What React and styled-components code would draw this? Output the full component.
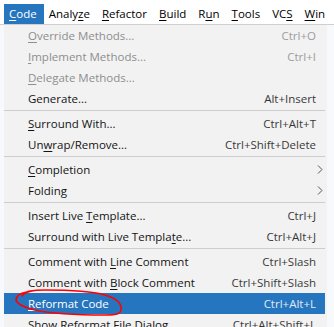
import React from 'react'
import styled, { createGlobalStyle } from 'styled-components'

const GlobalStyle = createGlobalStyle`
  html, body {
    margin: 0;
    padding: 0;
    background: #f7f9fc;
  }
  body {
    font-family: "Open Sans", "Noto Sans", sans-serif;
    font-size: 11.5px;
    color: #1b1b1b;
    overflow: hidden;
  }
`

const menus = [
  { label: 'Code', key: 0, open: true },
  { label: 'Analyze', key: 5 },
  { label: 'Refactor', key: 0 },
  { label: 'Build', key: 0 },
  { label: 'Run', key: 1 },
  { label: 'Tools', key: 0 },
  { label: 'VCS', key: 2 },
  { label: 'Win', key: 0 },
]

const groups = [
  [
    { label: 'Override Methods...', key: 0, shortcut: 'Ctrl+O', disabled: true },
    { label: 'Implement Methods...', key: 0, shortcut: 'Ctrl+I', disabled: true },
    { label: 'Delegate Methods...', key: 0, disabled: true },
    { label: 'Generate...', shortcut: 'Alt+Insert' },
  ],
  [
    { label: 'Surround With...', key: 0, shortcut: 'Ctrl+Alt+T' },
    { label: 'Unwrap/Remove...', key: 2, shortcut: 'Ctrl+Shift+Delete' },
  ],
  [
    { label: 'Completion', key: 0, sub: true },
    { label: 'Folding', sub: true },
  ],
  [
    { label: 'Insert Live Template...', key: 12, shortcut: 'Ctrl+J' },
    { label: 'Surround with Live Template...', key: 25, shortcut: 'Ctrl+Alt+J' },
  ],
  [
    { label: 'Comment with Line Comment', key: 13, shortcut: 'Ctrl+Slash' },
    { label: 'Comment with Block Comment', key: 13, shortcut: 'Ctrl+Shift+Slash' },
    { label: 'Reformat Code', key: 0, shortcut: 'Ctrl+Alt+L', active: true },
    { label: 'Show Reformat File Dialog', shortcut: 'Ctrl+Alt+Shift+L' },
  ],
]

function Mnemonic({ text, index }) {
  if (index === undefined) return text
  return (
    <>
      {text.slice(0, index)}
      <u>{text[index]}</u>
      {text.slice(index + 1)}
    </>
  )
}

function App() {
  return (
    <>
      <GlobalStyle />
      <MenuBar>
        {menus.map((m) => (
          <MenuTitle key={m.label} $open={m.open}>
            <Mnemonic text={m.label} index={m.key} />
          </MenuTitle>
        ))}
      </MenuBar>
      <Dropdown>
        {groups.map((items, gi) => (
          <React.Fragment key={gi}>
            {gi > 0 && <Separator />}
            {items.map((it) => (
              <Item key={it.label} $disabled={it.disabled} $active={it.active}>
                <span>
                  <Mnemonic text={it.label} index={it.key} />
                </span>
                <Shortcut>{it.shortcut}</Shortcut>
                <Arrow>
                  {it.sub && (
                    <svg width="6" height="9" viewBox="0 0 6 9">
                      <polyline points="1,0.5 5,4.5 1,8.5" fill="none" stroke="#555" strokeWidth="1" />
                    </svg>
                  )}
                </Arrow>
                {it.active && (
                  <Scribble width="112" height="32" viewBox="0 0 112 32">
                    <path
                      d="M9 9 C12 4 20 3 32 3 C52 3 78 4 92 8 C102 11 108 15 108 21 C109 27 104 28 92 28 C70 28 40 27 22 23 C10 20 4 17 3 13 C3 8 8 6 14 5"
                      fill="none"
                      stroke="#f00"
                      strokeWidth="1.6"
                      strokeLinecap="round"
                    />
                  </Scribble>
                )}
              </Item>
            ))}
          </React.Fragment>
        ))}
      </Dropdown>
    </>
  )
}

export default App

const MenuBar = styled.div`
  display: flex;
  align-items: flex-start;
  height: 25px;
  padding: 4px 0 0 4px;
  box-sizing: border-box;
  background: #ffffff;
  border-bottom: 1px solid #cfcfcf;
  white-space: nowrap;
  overflow: hidden;
  u { text-decoration-thickness: 1px; text-underline-offset: 2px; }
`

const MenuTitle = styled.div`
  height: 20px;
  line-height: 20px;
  padding: 0 7px 0 5px;
  background: ${(p) => (p.$open ? '#2675bf' : 'transparent')};
  color: ${(p) => (p.$open ? '#ffffff' : '#000000')};
  font-size: 11.5px;
`

const Dropdown = styled.div`
  margin-left: 4px;
  width: 323px;
  padding: 0 2px 0 0;
  box-sizing: border-box;
  background: #f2f2f2;
  u { text-decoration-thickness: 1px; text-underline-offset: 2px; }
`

const Separator = styled.div`
  height: 4px;
  display: flex;
  align-items: center;
  &::before {
    content: '';
    flex: 1;
    height: 1px;
    margin-top: -1px;
    background: #cdcdcd;
  }
`

const Item = styled.div`
  position: relative;
  display: grid;
  grid-template-columns: 1fr auto 7px;
  align-items: center;
  height: 21px;
  padding: 0 2px 0 24px;
  white-space: nowrap;
  background: ${(p) => (p.$active ? '#2675bf' : 'transparent')};
  color: ${(p) => (p.$active ? '#ffffff' : p.$disabled ? '#8e8e8e' : '#141414')};
`

const Shortcut = styled.span`
  text-align: right;
  color: inherit;
  opacity: 0.85;
`

const Arrow = styled.span`
  display: flex;
  justify-content: flex-end;
  align-items: center;
`

const Scribble = styled.svg`
  position: absolute;
  left: 9px;
  top: -6px;
  pointer-events: none;
`
